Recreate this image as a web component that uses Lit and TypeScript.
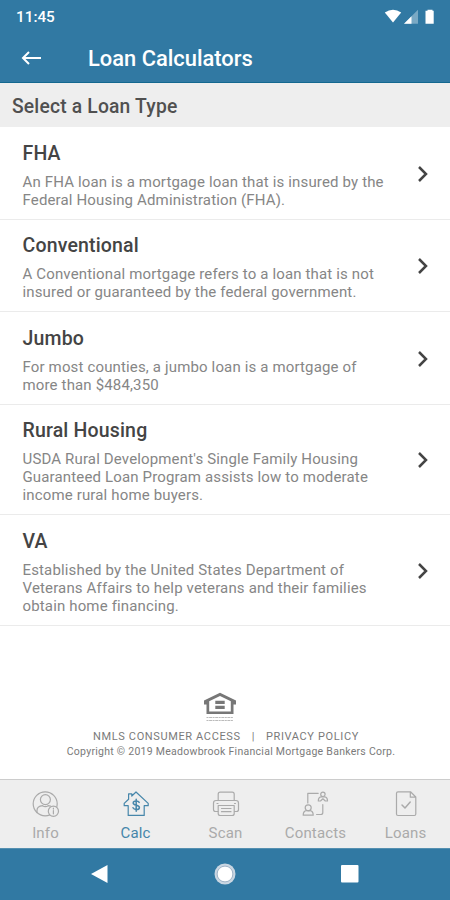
import { LitElement, html, svg, css } from "lit";
import { customElement } from "lit/decorators.js";
import { classMap } from "lit/directives/class-map.js";

const loans = [
  { title: "FHA", lines: ["An FHA loan is a mortgage loan that is insured by the", "Federal Housing Administration (FHA)."] },
  { title: "Conventional", lines: ["A Conventional mortgage refers to a loan that is not", "insured or guaranteed by the federal government."] },
  { title: "Jumbo", lines: ["For most counties, a jumbo loan is a mortgage of", "more than $484,350"] },
  { title: "Rural Housing", lines: ["USDA Rural Development's Single Family Housing", "Guaranteed Loan Program assists low to moderate", "income rural home buyers."] },
  { title: "VA", lines: ["Established by the United States Department of", "Veterans Affairs to help veterans and their families", "obtain home financing."] },
];

const tabs = [
  {
    label: "Info",
    icon: svg`<circle cx="13.2" cy="13.8" r="12"/><circle cx="13.4" cy="9.6" r="5"/>
      <path d="M5 22.6v-2.2c0-3.2 2.6-4.4 5.6-4.7 1.6 1.2 3.9 1.2 5.5 0l2.4.5"/>
      <circle class="plate" cx="21.4" cy="21.2" r="5.1"/><path d="M21.4 20.6v3.2M21.4 18.2v.9"/>`,
  },
  {
    label: "Calc",
    active: true,
    icon: svg`<path d="m14 2-4.2 4V3.8H6.6v5.4L2.2 13.4v2.3h4v9.7h16v-9.7h4v-2.3z"/>
      <path class="heavy" d="M17.2 12.4c-.5-1-1.7-1.5-3-1.5-1.7 0-3 .8-3 2.1 0 3 6.2 1.4 6.2 4.4 0 1.3-1.4 2.1-3.1 2.1-1.5 0-2.8-.6-3.3-1.7M14.2 9.2v12"/>`,
  },
  {
    label: "Scan",
    icon: svg`<path d="M6.2 10.5V4.2q0-2 2-2h12q2 0 2 2v6.3"/>
      <path d="M6 21.5H3.5q-2 0-2-2v-6.5q0-2.5 2.5-2.5h20q2.5 0 2.5 2.5v6.5q0 2-2 2H22.5"/>
      <path d="M6.2 15.5h16v8q0 2-2 2h-12q-2 0-2-2zM9.5 18.5h9.5M9.5 21.7h9.5M5 13.5h1M22.5 13.5h1"/>`,
  },
  {
    label: "Contacts",
    icon: svg`<path d="M5.8 13V3.3h10.4M14.6 24.5h4.2q2 0 2-2V14.500"/>
      <circle cx="6.2" cy="17.8" r="3"/><path d="M1.2 25.2c0-3 1.6-4.3 3.2-4.5h3.6c1.6.2 3.2 1.500 3.200 4.500z"/>
      <circle cx="20.9" cy="4.3" r="2.2"/><path d="M16.3 11c0-3 1.300-4 2.700-4.200h3.800c1.400.2 2.700 1.200 2.700 4.200h-2.200l-2.400-2.200-2.400 2.200z"/>`,
  },
  {
    label: "Loans",
    icon: svg`<path d="M6 1.8h12.5l5.3 5.2v17q0 1.5-1.5 1.5H6q-1.5 0-1.5-1.5V3.3q0-1.5 1.5-1.5zM18.3 2v5.2h5.5"/>
      <path class="heavy" d="m10 15 3 3 5.2-6"/>`,
  },
];

@customElement("app-root")
export class AppRoot extends LitElement {
  static styles = css`
    :host { display: flex; flex-direction: column; width: 450px; height: 900px; overflow: hidden; background: #fff; font-family: Roboto, sans-serif; color: #444; }
    * { box-sizing: border-box; }
    svg { display: block; fill: none; }
    .head { height: 83px; background: #3179a3; border-bottom: 1px solid #13688f; color: #fff; flex: none; }
    .status { height: 33px; padding: 0 15px 0 16px; display: flex; align-items: center; justify-content: space-between; font-size: 15.3px; font-weight: 500; }
    .bar { height: 50px; display: flex; align-items: center; padding-left: 21px; }
    .title { margin-left: 46px; font-size: 21.9px; font-weight: 500; line-height: 50px; padding-top: 1px; }
    .section { height: 44px; flex: none; background: #eee; padding-left: 12px; font-size: 19.3px; font-weight: 500; line-height: 47px; color: #505050; letter-spacing: .18px; }
    .row { flex: none; display: flex; align-items: center; padding: 13.6px 20px 10.5px 22.5px; border-bottom: 1px solid #ebebeb; }
    .row svg { margin-bottom: 1.5px; }
    .text { flex: 1; white-space: nowrap; }
    .name { font-size: 19.5px; line-height: 25px; font-weight: 500; color: #444; letter-spacing: .17px; }
    .desc { margin-top: 7px; margin-bottom: -.5px; font-size: 15px; line-height: 18px; color: #868686; letter-spacing: .15px; }
    .foot { flex: 1; display: flex; flex-direction: column; align-items: center; padding-top: 66px; color: #7a7a7a; white-space: nowrap; }
    .foot svg { margin-right: 10px; }
    .links { margin-top: 6px; display: flex; font-size: 11px; line-height: 15px; letter-spacing: .63px; margin-left: 2px; }
    .links span { margin: 0 11px; }
    .copy { font-size: 10.5px; line-height: 15px; letter-spacing: .27px; margin-left: 12px; }
    .tabs { height: 69px; flex: none; background: #eee; border-top: 1px solid #ccc; display: flex; }
    .tab { width: 90px; display: flex; flex-direction: column; align-items: center; padding: 10px 0 0 1px; color: #aaa; font-size: 15px; line-height: 18px; letter-spacing: .15px; }
    .tab svg { stroke: currentColor; stroke-width: 1.2; stroke-linejoin: round; stroke-linecap: round; margin-bottom: 6px; }
    .tab .heavy { stroke-width: 1.5; }
    .tab .plate { fill: #eee; }
    .tab.active { color: #4686aa; }
    .nav { height: 52px; flex: none; background: #3179a3; border-top: 1px solid #5590b0; display: flex; align-items: center; justify-content: space-between; padding: 0 91px 2px; }
  `;

  render() {
    return html`
      <div class="head">
        <div class="status">11:45
          <svg width="51" height="18" viewBox="0 0 51 18">
            <path fill="#fff" d="M.8 4.5Q9 -.8 17.2 4.5L9 14.5z"/>
            <path fill="#7aa9c4" d="M34 1.7v14H20z"/><path fill="#fff" d="M27.5 8.2v7.5H20z"/>
            <path fill="#fff" d="M41.5 2.8h2V1.8h5v1h1.2v13h-8.2z"/>
          </svg>
        </div>
        <div class="bar">
          <svg width="21" height="14" viewBox="0 0 21 14" stroke="#fff" stroke-width="2"><path d="M20 7H2M8 1 2 7l6 6"/></svg>
          <div class="title">Loan Calculators</div>
        </div>
      </div>
      <div class="section">Select a Loan Type</div>
      ${loans.map((l) => html`<div class="row">
        <div class="text"><div class="name">${l.title}</div>
          <div class="desc">${l.lines.map((t) => html`<div>${t}</div>`)}</div></div>
        <svg width="14" height="18" viewBox="0 0 14 18" stroke="#444" stroke-width="2.5"><path d="m3 2 7 7-7 7"/></svg>
      </div>`)}
      <div class="foot">
        <svg width="34" height="31" viewBox="0 0 34 31">
          <path fill="#777" fill-rule="evenodd" d="M17 .8 33 8.4v4.1h-2.5v9.5H3.5v-9.5H1V8.4zM17 3.9 6.2 9.2v10.3h21.6V9.2z"/>
          <path fill="#777" d="M12.3 8.7h9.4v3.2h-9.4zM12.3 13.7h9.4v3.2h-9.4z"/>
          <path stroke="#bbb" stroke-dasharray="2 .6 3 .5" d="M3.5 25.5h27M3.5 28.5h27"/>
        </svg>
        <div class="links">NMLS CONSUMER ACCESS<span>|</span>PRIVACY POLICY</div>
        <div class="copy">Copyright © 2019 Meadowbrook Financial Mortgage Bankers Corp.</div>
      </div>
      <div class="tabs">
        ${tabs.map((t) => html`<div class=${classMap({ tab: true, active: !!t.active })}>
          <svg width="28" height="28" viewBox="0 0 28 28">${t.icon}</svg>${t.label}</div>`)}
      </div>
      <div class="nav">
        <svg width="17" height="20" viewBox="0 0 17 20"><path fill="#fff" d="M0 10 16.5 1v18z"/></svg>
        <svg width="22" height="22" viewBox="0 0 22 22"><circle cx="11" cy="11" r="10.5" fill="#c9d6e2"/><circle cx="11" cy="11" r="7.9" fill="#fff" stroke="#9fb2c6"/></svg>
        <svg width="18" height="18" viewBox="0 0 18 18"><rect width="17.5" height="17.5" rx="1" fill="#fff"/></svg>
      </div>
    `;
  }
}
